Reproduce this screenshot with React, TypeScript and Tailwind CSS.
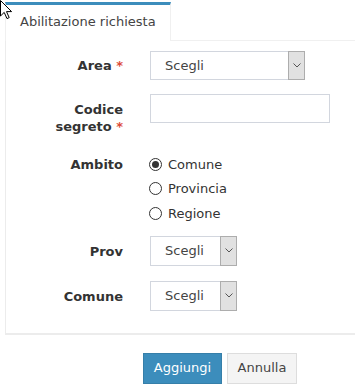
const font = { fontFamily: '"DejaVu Sans", Verdana, sans-serif' };

function Cursor() {
  return (
    <svg className="absolute left-0 top-0" width="14" height="20" viewBox="0 0 14 20">
      <path d="M0.5 0.5 L0.5 16 L4.2 12.4 L7 18.6 L9.2 17.6 L6.5 11.6 L11.6 11.6 Z" fill="#fff" stroke="#000" strokeWidth="1" strokeLinejoin="miter" />
    </svg>
  );
}

function Select({ width, height = 29 }: { width: number; height?: number }) {
  return (
    <div
      className="flex items-stretch border border-[#d2d6de] bg-white"
      style={{ width, height }}
    >
      <div className="flex flex-1 items-center pl-[14px] text-[13px] text-[#444]">
        Scegli
      </div>
      <div className="-my-px -mr-px flex w-[17px] items-center justify-center border border-[#adadad] bg-[#e1e1e1]">
        <svg width="8" height="5" viewBox="0 0 8 5">
          <path d="M0.5 0.5 L4 4 L7.5 0.5" fill="none" stroke="#555" strokeWidth="1" />
        </svg>
      </div>
    </div>
  );
}

function Radio({ label, checked }: { label: string; checked?: boolean }) {
  return (
    <div className="flex h-[24.5px] items-center">
      <span className="flex h-[13px] w-[13px] items-center justify-center rounded-full border border-[#333] bg-white">
        {checked && <span className="h-[7px] w-[7px] rounded-full bg-[#333]" />}
      </span>
      <span className="ml-[6px] text-[13px] text-[#333]">{label}</span>
    </div>
  );
}

function Label({ children }: { children: React.ReactNode }) {
  return (
    <div className="w-[117px] shrink-0 pt-[7px] text-right text-[13px] font-bold leading-[17px] text-[#333]">
      {children}
    </div>
  );
}

const Req = () => <span className="text-[#dd4b39]"> *</span>;

export default function App() {
  return (
    <div className="relative h-[392px] w-[355px] overflow-hidden bg-white" style={font}>
      <Cursor />
      <div className="pl-[5px] pt-[2px]">
        <div className="flex">
          <div className="border-x border-t-[3px] border-x-[#f0f0f0] border-t-[#3c8dbc] bg-white px-[14px] pt-[9px] pb-[11px] text-[13px] leading-[16px] text-[#444]">
            Abilitazione richiesta
          </div>
          <div className="flex-1 border-b border-[#f0f0f0]" />
        </div>
        <div className="border-l border-b-2 border-[#ececec] pt-[9px] pb-[22px]">
          <div className="flex gap-[27px]">
            <Label>
              Area<Req />
            </Label>
            <div className="pt-px">
              <Select width={155} />
            </div>
          </div>
          <div className="mt-[14px] flex gap-[27px]">
            <Label>
              Codice
              <br />
              segreto<Req />
            </Label>
            <div className="h-[29px] w-[180px] border border-[#d2d6de] bg-white" />
          </div>
          <div className="mt-[14px] flex gap-[26px]">
            <Label>Ambito</Label>
            <div className="pt-[3px]">
              <Radio label="Comune" checked />
              <Radio label="Provincia" />
              <Radio label="Regione" />
            </div>
          </div>
          <div className="mt-[10px] flex gap-[27px]">
            <Label>Prov</Label>
            <Select width={87} height={30} />
          </div>
          <div className="mt-[15px] flex gap-[27px]">
            <Label>Comune</Label>
            <Select width={87} height={30} />
          </div>
        </div>
      </div>
      <div className="mt-[18px] flex gap-[5px] pl-[143px]">
        <button className="h-[31px] w-[79px] border border-[#367fa9] bg-[#3c8dbc] text-[13px] text-white">
          Aggiungi
        </button>
        <button className="h-[31px] w-[70px] border border-[#ddd] bg-[#f4f4f4] text-[13px] text-[#444]">
          Annulla
        </button>
      </div>
    </div>
  );
}
